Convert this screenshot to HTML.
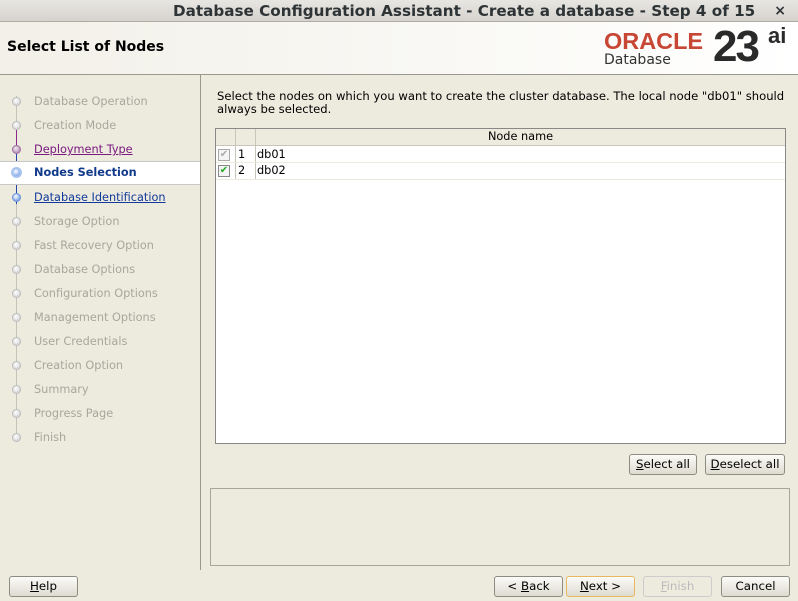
<!DOCTYPE html><html><head><style>
*{margin:0;padding:0;box-sizing:border-box}
body{width:798px;height:601px;background:#edeade;font-family:"DejaVu Sans","Liberation Sans",sans-serif;font-size:11.3px;color:#000;position:relative;overflow:hidden}
.abs{position:absolute}
.title{left:0;top:0;width:798px;height:22px;background:linear-gradient(#e8e6e2,#d6d3ce);border-bottom:1px solid #b0aca4;font-size:15.2px;font-weight:bold;color:#2e3436;line-height:23px}
.hdr{left:0;top:22px;width:798px;height:53px;background:linear-gradient(to right,#f2f0e8,#fff);border-bottom:1px solid #9a978c}
.step{position:absolute;left:34px;color:#a9a79c;font-size:11.3px}
.dot{position:absolute;left:12px;width:9px;height:9px;border-radius:50%;background:radial-gradient(circle at 40% 35%,#fff,#c8c8c8);border:1px solid #bbb}
.btn{position:absolute;height:21px;border:1px solid #8e8b80;border-radius:3px;background:linear-gradient(#fbfbf8,#dedbd0);text-align:center;line-height:19px;font-size:11.8px}
</style></head><body>
<div class="abs title"><span style="position:absolute;left:173px;top:0;white-space:nowrap">Database Configuration Assistant - Create a database - Step 4 of 15</span><span style="position:absolute;right:12px;top:0;font-size:14px">×</span></div>
<div class="abs hdr">
<div class="abs" style="left:7px;top:17px;font-size:14px;font-weight:bold">Select List of Nodes</div>
<div class="abs" style="left:604px;top:6px;font-size:23px;color:#c74634;font-weight:bold;transform:scaleX(1.02);transform-origin:left;font-family:'Liberation Sans',sans-serif">ORACLE</div>
<div class="abs" style="left:604px;top:30px;font-size:14px;color:#333">Database</div>
<div class="abs" style="left:713px;top:0px;font-size:44px;font-weight:bold;color:#2a2a2a;letter-spacing:-2px;font-family:'Liberation Sans',sans-serif">23</div>
<div class="abs" style="left:768px;top:1px;font-size:22px;font-weight:bold;color:#2a2a2a;font-family:'Liberation Sans',sans-serif">ai</div>
</div>
<div class="abs" style="left:200px;top:75px;width:1px;height:495px;background:#9a978c"></div>
<div class="abs" style="left:16px;top:96px;width:1px;height:344px;background:#c5c3bb"></div>
<div class="abs" style="left:16px;top:130px;width:1px;height:24px;background:#8a2a8a"></div>
<div class="abs" style="left:16px;top:154px;width:1px;height:50px;background:#2244aa"></div>
<div class="abs" style="left:0;top:161px;width:200px;height:24px;background:#fff;border-top:1px solid #c8c8c8;border-bottom:1px solid #c8c8c8"></div>
<div class="dot" style="top:97px"></div><div class="step" style="top:95px">Database Operation</div>
<div class="dot" style="top:121px"></div><div class="step" style="top:119px">Creation Mode</div>
<div class="dot" style="top:145px;background:radial-gradient(circle at 40% 35%,#eee,#a86aa8);border-color:#a070a0"></div><div class="step" style="top:143px;color:#7a1a80;text-decoration:underline">Deployment Type</div>
<div class="dot" style="top:167px;width:11px;height:11px;left:11px;background:radial-gradient(circle at 40% 35%,#fff,#5a8ee0);border:2px solid #a8c4ee"></div><div class="step" style="top:166px;color:#123a8c;font-weight:bold">Nodes Selection</div>
<div class="dot" style="top:193px;background:radial-gradient(circle at 40% 35%,#fff,#4a7fd8);border-color:#6a90d8"></div><div class="step" style="top:191px;color:#123a9c;text-decoration:underline">Database Identification</div>
<div class="dot" style="top:217px"></div><div class="step" style="top:215px">Storage Option</div>
<div class="dot" style="top:241px"></div><div class="step" style="top:239px">Fast Recovery Option</div>
<div class="dot" style="top:265px"></div><div class="step" style="top:263px">Database Options</div>
<div class="dot" style="top:289px"></div><div class="step" style="top:287px">Configuration Options</div>
<div class="dot" style="top:313px"></div><div class="step" style="top:311px">Management Options</div>
<div class="dot" style="top:337px"></div><div class="step" style="top:335px">User Credentials</div>
<div class="dot" style="top:361px"></div><div class="step" style="top:359px">Creation Option</div>
<div class="dot" style="top:385px"></div><div class="step" style="top:383px">Summary</div>
<div class="dot" style="top:409px"></div><div class="step" style="top:407px">Progress Page</div>
<div class="dot" style="top:433px"></div><div class="step" style="top:431px">Finish</div>
<div class="abs" style="left:217px;top:90px;line-height:13px;width:575px;font-size:11.6px">Select the nodes on which you want to create the cluster database. The local node "db01" should always be selected.</div>
<div class="abs" style="left:215px;top:128px;width:571px;height:316px;background:#fff;border:1px solid #888">
<div class="abs" style="left:0;top:0;width:569px;height:17px;background:#edeade;border-bottom:1px solid #c8c5ba"></div>
<div class="abs" style="left:19px;top:0;width:1px;height:51px;background:#c8c5ba"></div>
<div class="abs" style="left:39px;top:0;width:1px;height:51px;background:#c8c5ba"></div>
<div class="abs" style="left:0;top:1px;width:569px;text-align:center;padding-left:40px">Node name</div>
<div class="abs" style="left:0;top:33px;width:569px;height:1px;background:#ede9dc"></div>
<div class="abs" style="left:0;top:50px;width:569px;height:1px;background:#ede9dc"></div>
<div class="abs" style="left:2px;top:20px;width:12px;height:12px;border:1px solid #aaa;background:#f4f4f4;color:#aaa;font-size:10px;line-height:10px;text-align:center">✔</div>
<div class="abs" style="left:2px;top:36px;width:12px;height:12px;border:1px solid #888;background:#f4f4f4;color:#22aa22;font-size:10px;line-height:10px;text-align:center">✔</div>
<div class="abs" style="left:22px;top:19px">1</div><div class="abs" style="left:41px;top:19px">db01</div>
<div class="abs" style="left:22px;top:35px">2</div><div class="abs" style="left:41px;top:35px">db02</div>
</div>
<div class="btn" style="left:629px;top:454px;width:68px"><u>S</u>elect all</div>
<div class="btn" style="left:705px;top:454px;width:80px"><u>D</u>eselect all</div>
<div class="abs" style="left:210px;top:488px;width:580px;height:78px;border:1px solid #a8a59a"></div>
<div class="btn" style="left:9px;top:576px;width:69px"><u>H</u>elp</div>
<div class="btn" style="left:494px;top:576px;width:69px">&lt; <u>B</u>ack</div>
<div class="btn" style="left:566px;top:576px;width:69px;border-color:#e8b860"><u>N</u>ext &gt;</div>
<div class="btn" style="left:643px;top:576px;width:69px;color:#bbb;border-color:#ccc;background:#edeade"><u>F</u>inish</div>
<div class="btn" style="left:721px;top:576px;width:69px">Cancel</div>
</body></html>
